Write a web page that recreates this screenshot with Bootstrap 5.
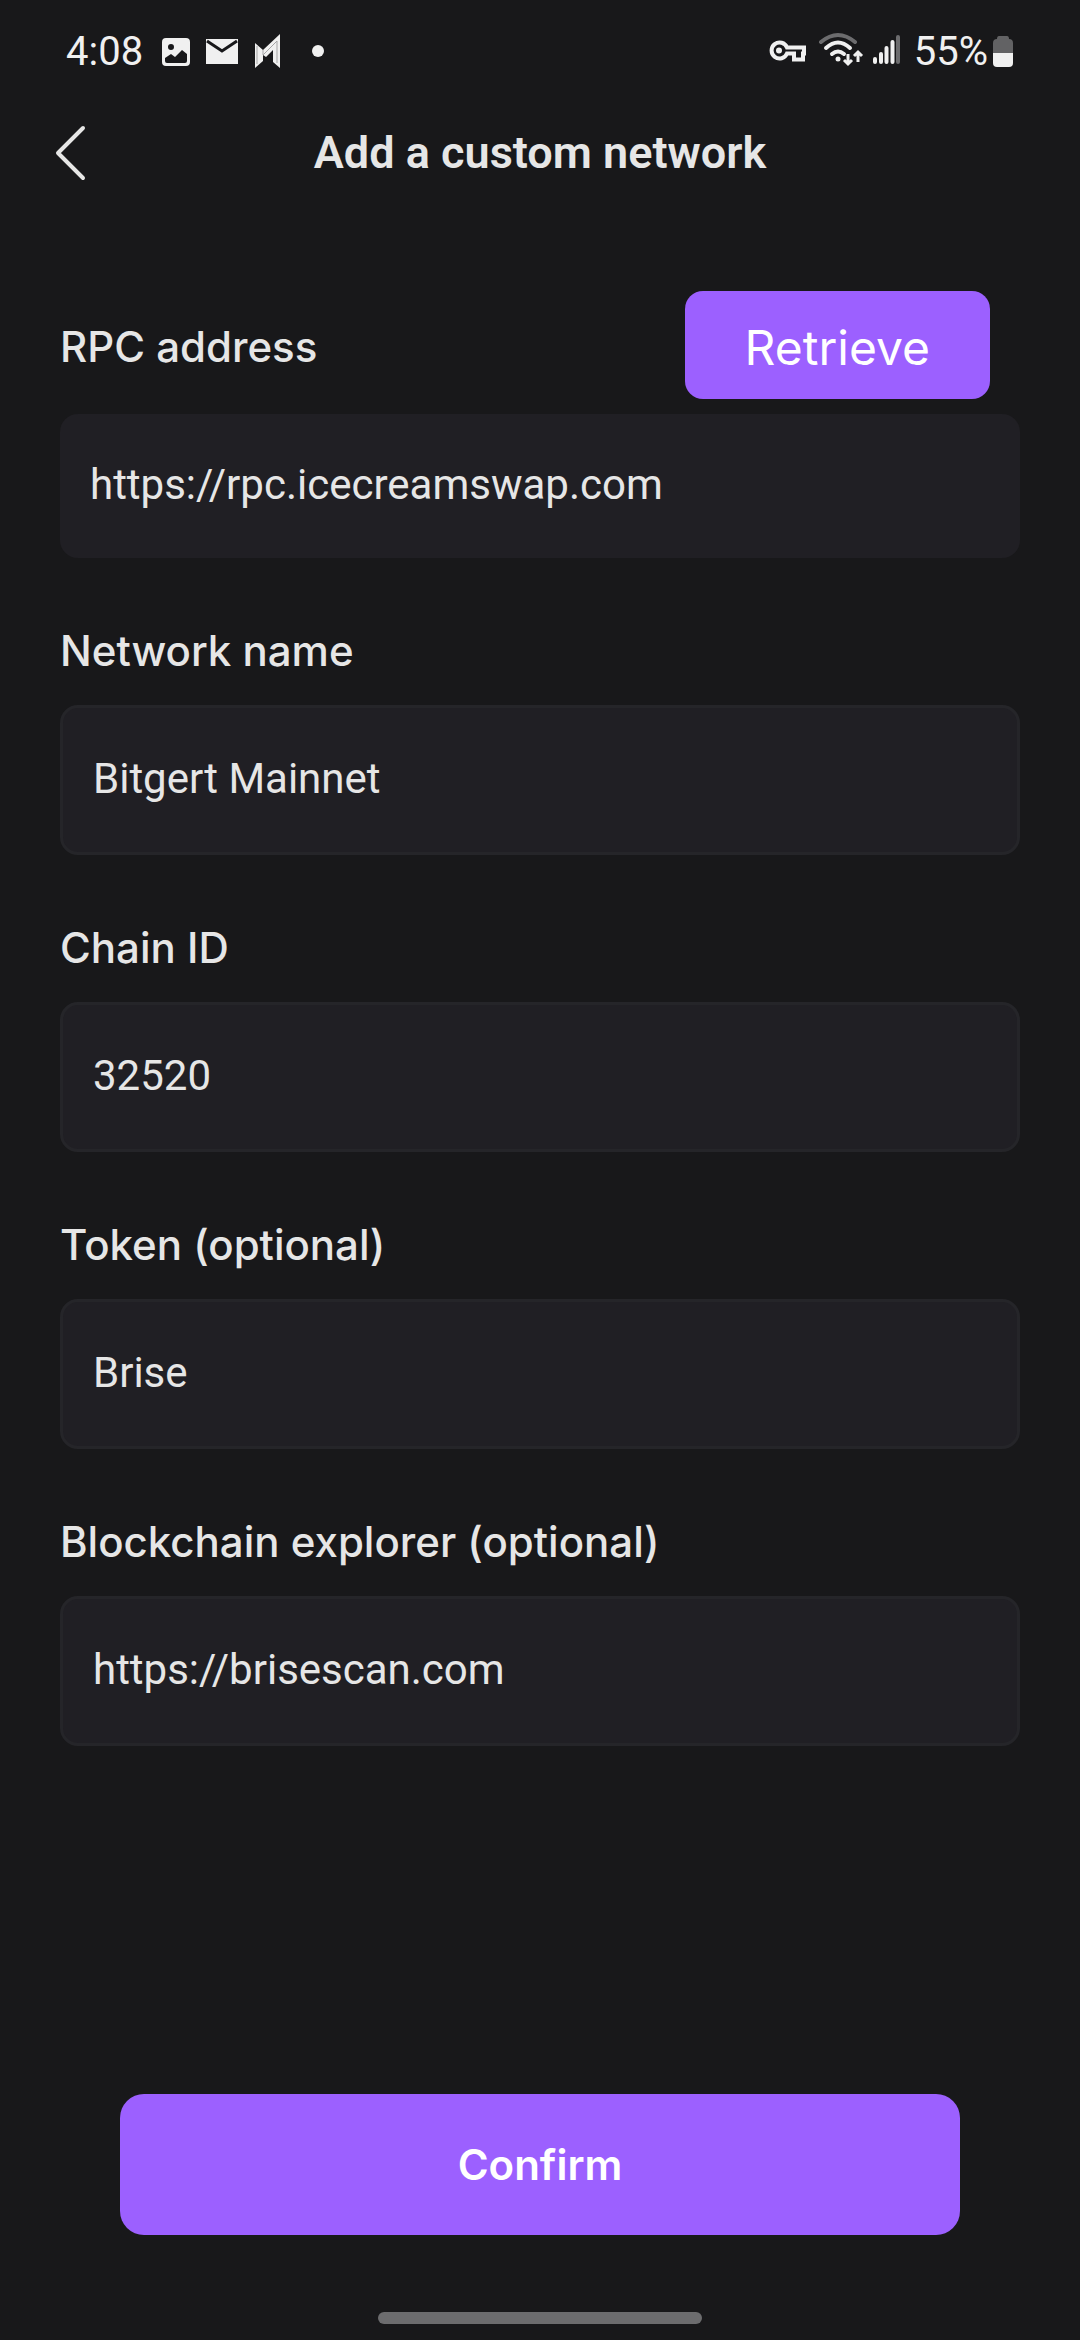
<!DOCTYPE html>
<html lang="en" data-bs-theme="dark">
<head>
<meta charset="utf-8">
<meta name="viewport" content="width=device-width, initial-scale=1">
<title>Add a custom network</title>
<link href="https://cdn.jsdelivr.net/npm/bootstrap@5.3.0/dist/css/bootstrap.min.css" rel="stylesheet">
<style>
body { background: #18181a; color: #e6e6e6; font-family: Roboto, sans-serif; }
.status-bar { height: 102px; padding: 2px 66px 0; font-size: 40px; line-height: 48px; color: #f0f0f0; }
.status-icons { gap: 14px; }
.status-bar svg, .back-link svg { display: block; flex: none; }
.title-bar { height: 102px; padding: 0 54px; }
.title-bar h1 { font-size: 45px; line-height: 54px; font-weight: 600; color: #e6e6e6; }
.title-side { width: 60px; }
.back-link { vertical-align: top; }
.net-form { padding: 87px 60px 0; }
.net-label { font-family: Inter, sans-serif; font-size: 42px; line-height: 60px; font-weight: 500; }
.field-group { margin-bottom: 63px; }
.field-group .net-label { margin-bottom: 24px; }
.field-head { margin-bottom: 15px; padding-right: 30px; }
.field-group .field-head .net-label { margin: 0; padding-top: 4px; }
.field-box { height: 150px; padding: 0 30px 3px; border: 3px solid #252529; border-radius: 18px; background: #201f24; color: #e6e6e6; font-size: 42px; }
.field-box.borderless { height: 144px; border: 0; }
.btn-violet { --bs-btn-bg: #9c60ff; --bs-btn-color: #fff; --bs-btn-hover-bg: #8a4df0; --bs-btn-hover-color: #fff; border: 0; font-family: Inter, sans-serif; }
.btn-retrieve { height: 108px; padding: 6px 60px 0; border-radius: 18px; font-size: 48px; }
.bottom-area { padding: 0 120px 105px; }
.btn-confirm { height: 141px; border-radius: 24px; font-size: 42px; font-weight: 600; }
.home-pill { width: 30%; height: 12px; bottom: 16px; background: #6c6c6e; }
</style>
</head>
<body class="min-vh-100 d-flex flex-column position-relative">
<div class="status-bar d-flex align-items-center justify-content-between">
  <div class="d-flex align-items-center status-icons">
    <span>4:08</span>
    <svg width="200" height="40" viewBox="0 0 200 40" fill="#f0f0f0" aria-hidden="true">
      <path fill-rule="evenodd" d="M9 6h20a4 4 0 0 1 4 4v20a4 4 0 0 1-4 4H9a4 4 0 0 1-4-4V10a4 4 0 0 1 4-4zM14 12a3 3 0 1 0 0 6 3 3 0 0 0 0-6zM8 26v3q0 2 2 2h18q2 0 2-2v-7l-5-4-7 7-4-3z"/>
      <path d="M49 7h32v25H49z"/><path d="M50 9l15 10L80 9" fill="none" stroke="#18181a" stroke-width="3"/>
      <path d="M98 11l8 7 17-16v34l-7-6V18l-7 7-3-2v6l-8 7z"/><path d="M100 14v18M106 18v5l14-14v22" fill="none" stroke="#a5a5a6" stroke-width="1"/>
      <circle cx="161" cy="19" r="6"/>
    </svg>
  </div>
  <div class="d-flex align-items-center status-icons">
    <svg width="132" height="40" viewBox="0 0 132 40" fill="none" stroke="#f0f0f0" aria-hidden="true">
      <path d="M19 15.500h17v6h-1v6h-9v-6h-7a8 8 0 1 1 0-6z" stroke-width="4"/><circle cx="11" cy="18.500" r="3" fill="#f0f0f0" stroke="none"/>
      <g stroke-linecap="round" stroke-width="4"><path d="M53 10q17-14 34 0" stroke="#6c6c6e"/><path d="M58 16q12-11 24 0M64 22q6-5 12 0"/></g>
      <circle cx="70" cy="27" r="2.500" fill="#f0f0f0" stroke="none"/>
      <path d="M80 22v10M76 28l4 4 4-4M90 30V20M86 24l4-4 4 4" stroke-width="3"/>
      <g stroke-width="4" stroke-linecap="round"><path d="M107 27v3M113 22v8M118.500 16v14M124.500 10v20"/><path d="M130 5v25" stroke="#6c6c6e"/></g>
    </svg>
    <div class="d-flex align-items-center gap-1"><span>55%</span>
    <svg width="22" height="40" viewBox="0 0 22 40" aria-hidden="true">
      <path d="M7 4h8q2 0 2 3 4 0 4 4v10H1V11q0-4 4-4 0-3 2-3z" fill="#626264"/><path d="M1 21h20v10q0 4-4 4H5q-4 0-4-4z" fill="#f0f0f0"/>
    </svg></div>
  </div>
</div>
<header class="title-bar d-flex align-items-center justify-content-between">
  <div class="title-side"><a href="#" class="back-link d-inline-block" aria-label="Back">
    <svg width="34" height="60" viewBox="0 0 34 60" fill="none" stroke="#e6e6e6" stroke-width="4" stroke-linecap="round" stroke-linejoin="round" aria-hidden="true"><path d="M29 5L4 30l25 25"/></svg>
  </a></div>
  <h1 class="m-0 text-center">Add a custom network</h1>
  <div class="title-side"></div>
</header>
<form class="flex-grow-1 d-flex flex-column justify-content-between">
  <div class="net-form">
    <div class="field-group">
      <div class="field-head d-flex align-items-center justify-content-between">
        <label class="net-label" for="rpc">RPC address</label>
        <button type="button" class="btn btn-violet btn-retrieve">Retrieve</button>
      </div>
      <input id="rpc" type="text" class="form-control field-box borderless" value="https://rpc.icecreamswap.com">
    </div>
    <div class="field-group">
      <label class="net-label d-block" for="name">Network name</label>
      <input id="name" type="text" class="form-control field-box" value="Bitgert Mainnet">
    </div>
    <div class="field-group">
      <label class="net-label d-block" for="chain">Chain ID</label>
      <input id="chain" type="text" class="form-control field-box" value="32520">
    </div>
    <div class="field-group">
      <label class="net-label d-block" for="token">Token (optional)</label>
      <input id="token" type="text" class="form-control field-box" value="Brise">
    </div>
    <div class="field-group">
      <label class="net-label d-block" for="explorer">Blockchain explorer (optional)</label>
      <input id="explorer" type="text" class="form-control field-box" value="https://brisescan.com">
    </div>
  </div>
  <div class="bottom-area"><button type="submit" class="btn btn-violet btn-confirm w-100">Confirm</button></div>
</form>
<div class="home-pill position-absolute start-50 translate-middle-x rounded-pill"></div>
<script src="https://cdn.jsdelivr.net/npm/bootstrap@5.3.0/dist/js/bootstrap.bundle.min.js"></script>
</body>
</html>
